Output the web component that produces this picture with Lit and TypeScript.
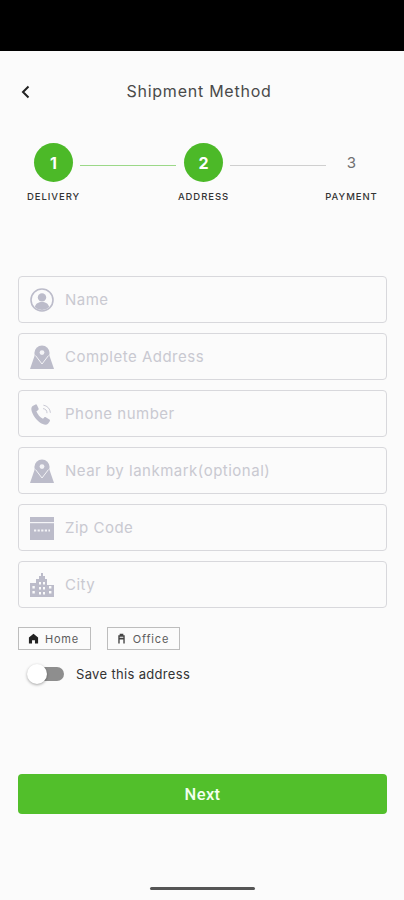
import { LitElement, html, css, svg } from "lit";
import { customElement } from "lit/decorators.js";

const pin = svg`<path fill="#bcbcca" d="M5.500 8h13L24 24H0z"/><circle cx="12" cy="8" r="7.600" fill="#bcbcca"/><circle cx="12" cy="7.600" r="2.400" fill="#f4f4f7"/><path d="M5.500 10.500 12 19l6.500-8.500" fill="none" stroke="#f4f4f7" stroke-width="1"/>`;

const icons: Record<string, unknown> = {
  user: svg`<circle cx="12" cy="12" r="11" fill="none" stroke="#bcbcca" stroke-width="1.600"/><circle cx="12" cy="9.400" r="4.200" fill="#bcbcca"/><path d="M4.800 19c1-3.600 3.600-5 7.200-5s6.200 1.400 7.200 5a10 10 0 0 1-14.400 0z" fill="#bcbcca"/>`,
  pin,
  phone: svg`<path fill="#bcbcca" d="M5.600 2.400 2.600 4c-1.400 1-1.600 3-.8 5.400 1.800 5.400 6 10.400 11 12.600 2.200 1 4.200.8 5.400-.6l1.600-2.200c.4-.6.2-1.200-.4-1.600l-3.600-2.400c-.6-.4-1.200-.2-1.600.2l-1.200 1.400c-3-1.400-5.400-4.400-6.600-7.600l1.600-1c.6-.4.8-1 .6-1.600L6.800 2.800c-.3-.6-.8-.7-1.200-.4z"/><path d="M13 6.600a4.600 4.600 0 0 1 4 4.600M13.400 3.200a8 8 0 0 1 7 7.600" fill="none" stroke="#bcbcca" stroke-width=".8"/>`,
  zip: svg`<path fill="#bcbcca" d="M0 1h24v23H0z"/><path d="M0 6.600h24" stroke="#f4f4f7" stroke-width="1.200"/><path d="M4 14.600h16" stroke="#f4f4f7" stroke-width="2" stroke-dasharray="2.200 1.400"/>`,
  city: svg`<path fill="#bcbcca" fill-rule="evenodd" d="M0 10h6V6h3V3h2V0h2v3h2v3h2v6h7v12H0zM2.400 13v2.400h2.400V13zm0 5v2.400h2.400V18zM9 9v2.400h2V9zm4 0v2.400h2V9zm-4 5v2.400h2V14zm4 0v2.400h2V14zm-4 5v2.400h2V19zm4 0v2.400h2V19zm6-6v2.400h2.400V13zm0 5v2.400h2.400V18z"/>`,
};

const fields = [
  ["user", "Name"],
  ["pin", "Complete Address"],
  ["phone", "Phone number"],
  ["pin", "Near by lankmark(optional)"],
  ["zip", "Zip Code"],
  ["city", "City"],
];

@customElement("app-root")
export class AppRoot extends LitElement {
  static styles = css`
    :host {
      display: block;
      width: 404px;
      height: 900px;
      background: #fbfbfb;
      font-family: "Inter", "Open Sans", sans-serif;
      overflow: hidden;
    }
    .status { height: 51px; background: #000; }
    .page { display: flex; flex-direction: column; height: 849px; padding: 0 17px 0 18px; box-sizing: border-box; }
    .header { height: 80px; display: flex; align-items: center; position: relative; justify-content: center; padding-right: 7px; box-sizing: border-box; }
    .back { position: absolute; left: 2px; top: 33px; width: 11px; height: 16px; }
    .title { font-size: 16px; color: #4a4a4a; letter-spacing: 0.75px; white-space: nowrap; }
    .stepper { display: flex; align-items: flex-start; height: 133px; margin-top: 12px; padding-left: 16px; }
    .step { width: 39px; display: flex; flex-direction: column; align-items: center; flex: none; }
    .circle { width: 39px; height: 39px; border-radius: 50%; background: #4cb928; color: #fff; font-weight: 700; font-size: 16px; display: flex; align-items: center; justify-content: center; }
    .circle.off { background: none; color: #6f6f6f; font-weight: 400; font-size: 15px; padding-bottom: 1px; box-sizing: border-box; }
    .lab { margin-top: 9px; font-size: 9.5px; color: #333; font-weight: 500; white-space: nowrap; letter-spacing: 0.95px; }
    .line { width: 96px; height: 1px; margin: 22px 8px 0 7px; flex: none; background: #9bd888; }
    .line.grey { background: #cfcfcf; margin-right: 6px; }
    .fields { display: flex; flex-direction: column; gap: 10px; }
    .field { height: 47px; box-sizing: border-box; border: 1px solid #d8d8dc; border-radius: 4px; display: flex; align-items: center; padding-left: 11px; gap: 11px; }
    .field svg { width: 24px; height: 24px; flex: none; }
    .ph { color: #c9c9d1; font-size: 15px; letter-spacing: 0.5px; white-space: nowrap; }
    .chips { display: flex; gap: 16px; margin-top: 19px; }
    .chip { width: 73px; height: 23px; box-sizing: border-box; border: 1px solid #bdbdbd; display: flex; align-items: center; justify-content: center; gap: 6px; font-size: 11px; letter-spacing: 0.8px; color: #5c5c5c; padding-right: 2px; }
    .chip svg { width: 11px; height: 11px; }
    .save { display: flex; align-items: center; margin-top: 12px; padding-left: 10px; height: 23px; }
    .toggle { position: relative; width: 36px; height: 14px; background: #8e8e8e; border-radius: 7px; flex: none; margin-right: 12px; }
    .knob { position: absolute; left: -1px; top: -3px; width: 20px; height: 20px; border-radius: 50%; background: #fff; box-shadow: 0 1px 3px rgba(0,0,0,.35); }
    .save span { font-size: 13px; letter-spacing: 0.33px; color: #333; }
    .next { margin-top: 89px; height: 40px; border-radius: 4px; background: #52bf2b; color: #f4fff0; border: 0; font: 500 16.5px "Roboto", sans-serif; letter-spacing: 0.4px; flex: none; }
    .bar { align-self: center; margin-top: 73px; width: 105px; height: 3px; border-radius: 2px; background: #555; flex: none; }
  `;

  render() {
    return html`
      <div class="status"></div>
      <div class="page">
        <div class="header">
          <svg class="back" viewBox="0 0 11 16"><path d="M8.500 2.500 3 8l5.500 5.500" fill="none" stroke="#222" stroke-width="2"/></svg>
          <span class="title">Shipment Method</span>
        </div>
        <div class="stepper">
          <div class="step"><div class="circle">1</div><div class="lab">DELIVERY</div></div>
          <div class="line"></div>
          <div class="step"><div class="circle">2</div><div class="lab">ADDRESS</div></div>
          <div class="line grey"></div>
          <div class="step"><div class="circle off">3</div><div class="lab">PAYMENT</div></div>
        </div>
        <div class="fields">
          ${fields.map(([i, t]) => html`<div class="field"><svg viewBox="0 0 24 24">${icons[i]}</svg><span class="ph">${t}</span></div>`)}
        </div>
        <div class="chips">
          <div class="chip"><svg viewBox="0 0 12 12"><path d="M6 .8 11 5v6.400H7.600V8H4.400v3.400H1V5z" fill="#222"/></svg>Home</div>
          <div class="chip"><svg viewBox="0 0 12 12"><path fill="#444" d="M4 .8h4v1.600H9.500V11.500H8V7H4v4.500H2.500V2.400H4zM4 4v1.200h4V4z"/></svg>Office</div>
        </div>
        <div class="save"><div class="toggle"><div class="knob"></div></div><span>Save this address</span></div>
        <button class="next">Next</button>
        <div class="bar"></div>
      </div>
    `;
  }
}
